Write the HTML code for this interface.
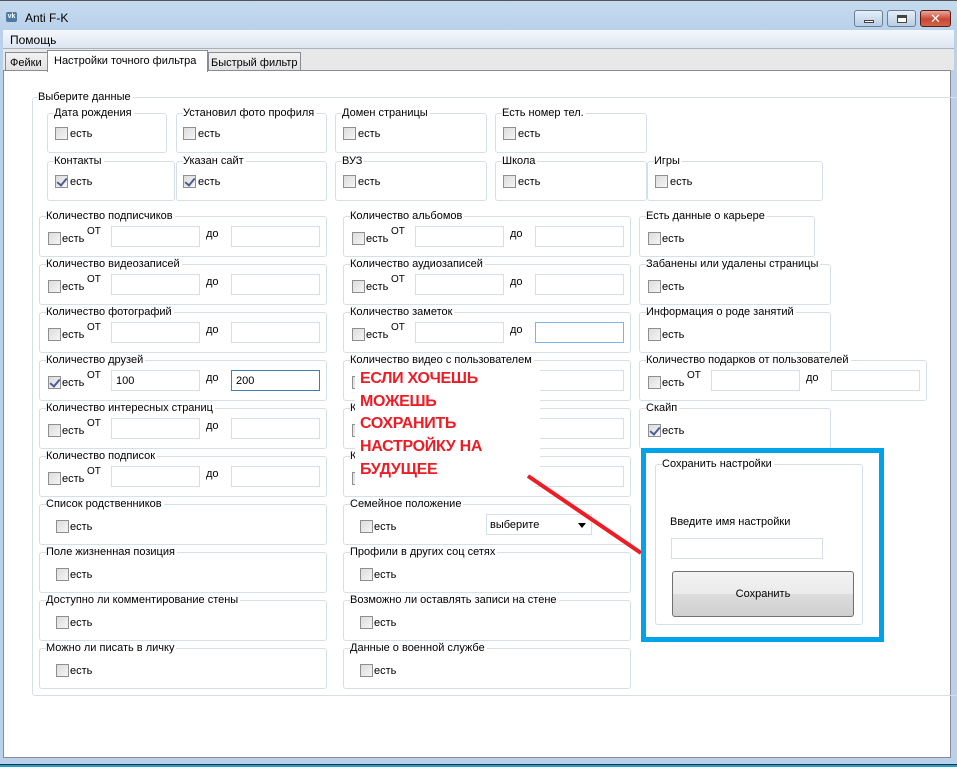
<!DOCTYPE html>
<html><head><meta charset="utf-8"><style>
*{box-sizing:border-box}
body{margin:0;width:957px;height:767px;overflow:hidden;background:#b9d1ea;font-family:"Liberation Sans","DejaVu Sans",sans-serif;font-size:11px;color:#000;position:relative}
.a{position:absolute}
.g{position:absolute;border:1px solid #d5dfe5;border-radius:3px}
.lg{position:absolute;top:-8px;left:6px;background:#fff;padding-right:2px;white-space:nowrap;line-height:14px}
.cb{position:absolute;width:13px;height:13px;border:1px solid #8e8f8f;background:linear-gradient(135deg,#dcdcdc,#f5f5f5)}
.cb.k::after{content:"";position:absolute;left:3px;top:0px;width:4px;height:8px;border:solid #4a5f97;border-width:0 2px 2px 0;transform:rotate(40deg)}
.t{position:absolute;white-space:nowrap;line-height:12px}
.in{position:absolute;width:89px;height:21px;border:1px solid #d5dfe5;background:#fff;padding:3px 4px;line-height:14px}
.ot{position:absolute;font-size:10px}
</style></head><body>
<div class="a" style="left:0;top:0;width:957px;height:30px;background:linear-gradient(#c6dbef,#b9d1ea)"></div>
<div class="a" style="left:0;top:0;width:957px;height:1px;background:#555"></div>
<div class="a" style="left:6px;top:12px;width:11px;height:10px;background:#4f79a4;border-radius:2px;color:#fff;font-size:7px;font-weight:bold;line-height:10px;text-align:center">vk</div>
<div class="t" style="left:25px;top:12px;font-size:12px">Anti F-K</div>
<div class="a" style="left:854px;top:10px;width:29px;height:17px;border:1px solid #6c7e93;border-radius:3px;background:linear-gradient(#e4eef9,#b8cde4)"><div class="a" style="left:9px;top:9px;width:10px;height:3px;background:#fff;border:1px solid #444"></div></div>
<div class="a" style="left:887px;top:10px;width:29px;height:17px;border:1px solid #6c7e93;border-radius:3px;background:linear-gradient(#e4eef9,#b8cde4)"><div class="a" style="left:9px;top:4px;width:10px;height:8px;border:1px solid #444;border-top-width:3px;background:#fff"></div></div>
<div class="a" style="left:920px;top:10px;width:31px;height:17px;border:1px solid #5a1a12;border-radius:3px;background:linear-gradient(#e9a99c,#c94632 55%,#d1654c);color:#fff;font-weight:bold;text-align:center;line-height:15px;font-size:13px">✕</div>
<div class="a" style="left:3px;top:30px;width:951px;height:19px;background:linear-gradient(#f4f7fc,#dde6f2);border-bottom:1px solid #a9b3c0"></div>
<div class="t" style="left:10px;top:34px;font-size:12px">Помощь</div>
<div class="a" style="left:3px;top:49px;width:951px;height:21px;background:#e8e8e8"></div>
<div class="a" style="left:5px;top:52px;width:43px;height:19px;border:1px solid #898c95;border-bottom:none;background:linear-gradient(#f2f2f2,#e1e1e1)"></div>
<div class="t" style="left:10px;top:57px">Фейки</div>
<div class="a" style="left:208px;top:52px;width:93px;height:19px;border:1px solid #898c95;border-bottom:none;background:linear-gradient(#f2f2f2,#e1e1e1)"></div>
<div class="t" style="left:211px;top:57px">Быстрый фильтр</div>
<div class="a" style="left:3px;top:70px;width:948px;height:688px;background:#fff;border:1px solid #898c95"></div>
<div class="a" style="left:47px;top:50px;width:161px;height:22px;border:1px solid #898c95;border-bottom:none;background:#fff"></div>
<div class="t" style="left:54px;top:55px">Настройки точного фильтра</div>
<div class="a" style="left:0;top:764px;width:957px;height:3px;background:#1e9fd8;border-top:1px solid #333"></div>

<div class="g" style="left:32px;top:97px;width:930px;height:599px"><div class="lg" style="left:5px">Выберите данные</div></div>

<div class="g" style="left:47px;top:113px;width:120px;height:40px"><div class="lg">Дата рождения</div></div>
<div class="cb" style="left:55px;top:127px"></div><div class="t" style="left:70px;top:128px">есть</div>
<div class="g" style="left:176px;top:113px;width:151px;height:40px"><div class="lg">Установил фото профиля</div></div>
<div class="cb" style="left:183px;top:127px"></div><div class="t" style="left:198px;top:128px">есть</div>
<div class="g" style="left:335px;top:113px;width:152px;height:40px"><div class="lg">Домен страницы</div></div>
<div class="cb" style="left:343px;top:127px"></div><div class="t" style="left:358px;top:128px">есть</div>
<div class="g" style="left:495px;top:113px;width:152px;height:40px"><div class="lg">Есть номер тел.</div></div>
<div class="cb" style="left:503px;top:127px"></div><div class="t" style="left:518px;top:128px">есть</div>
<div class="g" style="left:47px;top:161px;width:128px;height:40px"><div class="lg">Контакты</div></div>
<div class="cb k" style="left:55px;top:175px"></div><div class="t" style="left:70px;top:176px">есть</div>
<div class="g" style="left:176px;top:161px;width:151px;height:40px"><div class="lg">Указан сайт</div></div>
<div class="cb k" style="left:183px;top:175px"></div><div class="t" style="left:198px;top:176px">есть</div>
<div class="g" style="left:335px;top:161px;width:152px;height:40px"><div class="lg">ВУЗ</div></div>
<div class="cb" style="left:343px;top:175px"></div><div class="t" style="left:358px;top:176px">есть</div>
<div class="g" style="left:495px;top:161px;width:152px;height:40px"><div class="lg">Школа</div></div>
<div class="cb" style="left:503px;top:175px"></div><div class="t" style="left:518px;top:176px">есть</div>
<div class="g" style="left:647px;top:161px;width:176px;height:40px"><div class="lg">Игры</div></div>
<div class="cb" style="left:655px;top:175px"></div><div class="t" style="left:670px;top:176px">есть</div>

<div class="g" style="left:39px;top:216px;width:288px;height:41px"><div class="lg">Количество подписчиков</div><div class="cb" style="left:8px;top:15px"></div><div class="t" style="left:22px;top:16px">есть</div><div class="ot" style="left:47px;top:9px">ОТ</div><div class="in" style="left:71px;top:9px"></div><div class="t" style="left:166px;top:11px">до</div><div class="in" style="left:191px;top:9px"></div></div>
<div class="g" style="left:39px;top:264px;width:288px;height:41px"><div class="lg">Количество видеозаписей</div><div class="cb" style="left:8px;top:15px"></div><div class="t" style="left:22px;top:16px">есть</div><div class="ot" style="left:47px;top:9px">ОТ</div><div class="in" style="left:71px;top:9px"></div><div class="t" style="left:166px;top:11px">до</div><div class="in" style="left:191px;top:9px"></div></div>
<div class="g" style="left:39px;top:312px;width:288px;height:41px"><div class="lg">Количество фотографий</div><div class="cb" style="left:8px;top:15px"></div><div class="t" style="left:22px;top:16px">есть</div><div class="ot" style="left:47px;top:9px">ОТ</div><div class="in" style="left:71px;top:9px"></div><div class="t" style="left:166px;top:11px">до</div><div class="in" style="left:191px;top:9px"></div></div>
<div class="g" style="left:39px;top:360px;width:288px;height:41px"><div class="lg">Количество друзей</div><div class="cb k" style="left:8px;top:15px"></div><div class="t" style="left:22px;top:16px">есть</div><div class="ot" style="left:47px;top:9px">ОТ</div><div class="in" style="left:71px;top:9px">100</div><div class="t" style="left:166px;top:11px">до</div><div class="in" style="left:191px;top:9px;border-color:#3c7fb1">200</div></div>
<div class="g" style="left:39px;top:408px;width:288px;height:41px"><div class="lg">Количество интересных страниц</div><div class="cb" style="left:8px;top:15px"></div><div class="t" style="left:22px;top:16px">есть</div><div class="ot" style="left:47px;top:9px">ОТ</div><div class="in" style="left:71px;top:9px"></div><div class="t" style="left:166px;top:11px">до</div><div class="in" style="left:191px;top:9px"></div></div>
<div class="g" style="left:39px;top:456px;width:288px;height:41px"><div class="lg">Количество подписок</div><div class="cb" style="left:8px;top:15px"></div><div class="t" style="left:22px;top:16px">есть</div><div class="ot" style="left:47px;top:9px">ОТ</div><div class="in" style="left:71px;top:9px"></div><div class="t" style="left:166px;top:11px">до</div><div class="in" style="left:191px;top:9px"></div></div>
<div class="g" style="left:39px;top:504px;width:288px;height:41px"><div class="lg">Список родственников</div><div class="cb" style="left:16px;top:15px"></div><div class="t" style="left:30px;top:16px">есть</div></div>
<div class="g" style="left:39px;top:552px;width:288px;height:41px"><div class="lg">Поле жизненная позиция</div><div class="cb" style="left:16px;top:15px"></div><div class="t" style="left:30px;top:16px">есть</div></div>
<div class="g" style="left:39px;top:600px;width:288px;height:41px"><div class="lg">Доступно ли комментирование стены</div><div class="cb" style="left:16px;top:15px"></div><div class="t" style="left:30px;top:16px">есть</div></div>
<div class="g" style="left:39px;top:648px;width:288px;height:41px"><div class="lg">Можно ли писать в личку</div><div class="cb" style="left:16px;top:15px"></div><div class="t" style="left:30px;top:16px">есть</div></div>

<div class="g" style="left:343px;top:216px;width:288px;height:41px"><div class="lg">Количество альбомов</div><div class="cb" style="left:8px;top:15px"></div><div class="t" style="left:22px;top:16px">есть</div><div class="ot" style="left:47px;top:9px">ОТ</div><div class="in" style="left:71px;top:9px"></div><div class="t" style="left:166px;top:11px">до</div><div class="in" style="left:191px;top:9px"></div></div>
<div class="g" style="left:343px;top:264px;width:288px;height:41px"><div class="lg">Количество аудиозаписей</div><div class="cb" style="left:8px;top:15px"></div><div class="t" style="left:22px;top:16px">есть</div><div class="ot" style="left:47px;top:9px">ОТ</div><div class="in" style="left:71px;top:9px"></div><div class="t" style="left:166px;top:11px">до</div><div class="in" style="left:191px;top:9px"></div></div>
<div class="g" style="left:343px;top:312px;width:288px;height:41px"><div class="lg">Количество заметок</div><div class="cb" style="left:8px;top:15px"></div><div class="t" style="left:22px;top:16px">есть</div><div class="ot" style="left:47px;top:9px">ОТ</div><div class="in" style="left:71px;top:9px"></div><div class="t" style="left:166px;top:11px">до</div><div class="in" style="left:191px;top:9px;border-color:#7eb4ea"></div></div>
<div class="g" style="left:343px;top:360px;width:288px;height:41px"><div class="lg">Количество видео с пользователем</div><div class="cb" style="left:8px;top:15px"></div><div class="in" style="left:191px;top:9px"></div></div>
<div class="g" style="left:343px;top:408px;width:288px;height:41px"><div class="lg">Количество фото с пользователем</div><div class="cb" style="left:8px;top:15px"></div><div class="in" style="left:191px;top:9px"></div></div>
<div class="g" style="left:343px;top:456px;width:288px;height:41px"><div class="lg">Количество</div><div class="cb" style="left:8px;top:15px"></div><div class="in" style="left:191px;top:9px"></div></div>
<div class="g" style="left:343px;top:504px;width:288px;height:41px"><div class="lg">Семейное положение</div><div class="cb" style="left:16px;top:15px"></div><div class="t" style="left:30px;top:16px">есть</div>
<div class="a" style="left:142px;top:9px;width:106px;height:21px;border:1px solid #d5dfe5;padding:3px 3px;line-height:14px">выберите<span class="a" style="right:5px;top:8px;border:4px solid transparent;border-top:5px solid #000;border-bottom:0"></span></div></div>
<div class="g" style="left:343px;top:552px;width:288px;height:41px"><div class="lg">Профили в других соц сетях</div><div class="cb" style="left:16px;top:15px"></div><div class="t" style="left:30px;top:16px">есть</div></div>
<div class="g" style="left:343px;top:600px;width:288px;height:41px"><div class="lg">Возможно ли оставлять записи на стене</div><div class="cb" style="left:16px;top:15px"></div><div class="t" style="left:30px;top:16px">есть</div></div>
<div class="g" style="left:343px;top:648px;width:288px;height:41px"><div class="lg">Данные о военной службе</div><div class="cb" style="left:16px;top:15px"></div><div class="t" style="left:30px;top:16px">есть</div></div>

<div class="g" style="left:639px;top:216px;width:176px;height:41px"><div class="lg">Есть данные о карьере</div><div class="cb" style="left:8px;top:15px"></div><div class="t" style="left:22px;top:16px">есть</div></div>
<div class="g" style="left:639px;top:264px;width:192px;height:41px"><div class="lg">Забанены или удалены страницы</div><div class="cb" style="left:8px;top:15px"></div><div class="t" style="left:22px;top:16px">есть</div></div>
<div class="g" style="left:639px;top:312px;width:192px;height:41px"><div class="lg">Информация о роде занятий</div><div class="cb" style="left:8px;top:15px"></div><div class="t" style="left:22px;top:16px">есть</div></div>
<div class="g" style="left:639px;top:360px;width:288px;height:41px"><div class="lg">Количество подарков от пользователей</div><div class="cb" style="left:8px;top:15px"></div><div class="t" style="left:22px;top:16px">есть</div><div class="ot" style="left:47px;top:9px">ОТ</div><div class="in" style="left:71px;top:9px"></div><div class="t" style="left:166px;top:11px">до</div><div class="in" style="left:191px;top:9px"></div></div>
<div class="g" style="left:639px;top:408px;width:192px;height:41px"><div class="lg">Скайп</div><div class="cb k" style="left:8px;top:15px"></div><div class="t" style="left:22px;top:16px">есть</div></div>

<div class="a" style="left:355px;top:366px;width:185px;height:120px;background:#fff"></div>
<div class="a" style="left:360px;top:368px;color:#ee1c25;font-weight:bold;font-size:16px;line-height:22.7px;white-space:nowrap;letter-spacing:-0.3px">ЕСЛИ ХОЧЕШЬ<br>МОЖЕШЬ<br>СОХРАНИТЬ<br>НАСТРОЙКУ НА<br>БУДУЩЕЕ</div>
<svg class="a" style="left:0;top:0" width="957" height="767"><line x1="528" y1="476" x2="641" y2="553" stroke="#ee1c25" stroke-width="4"/></svg>

<div class="a" style="left:641px;top:448px;width:243px;height:194px;border:5px solid #00a2e8;background:#fff"></div>
<div class="g" style="left:655px;top:464px;width:208px;height:161px"><div class="lg" style="left:6px">Сохранить настройки</div></div>
<div class="t" style="left:670px;top:516px">Введите имя настройки</div>
<div class="a" style="left:671px;top:538px;width:152px;height:21px;border:1px solid #d5dfe5"></div>
<div class="a" style="left:672px;top:571px;width:182px;height:46px;border:1px solid #707070;border-radius:3px;background:linear-gradient(#f2f2f2,#ebebeb 50%,#dddddd 50%,#cfcfcf);text-align:center;line-height:44px">Сохранить</div>
</body></html>
